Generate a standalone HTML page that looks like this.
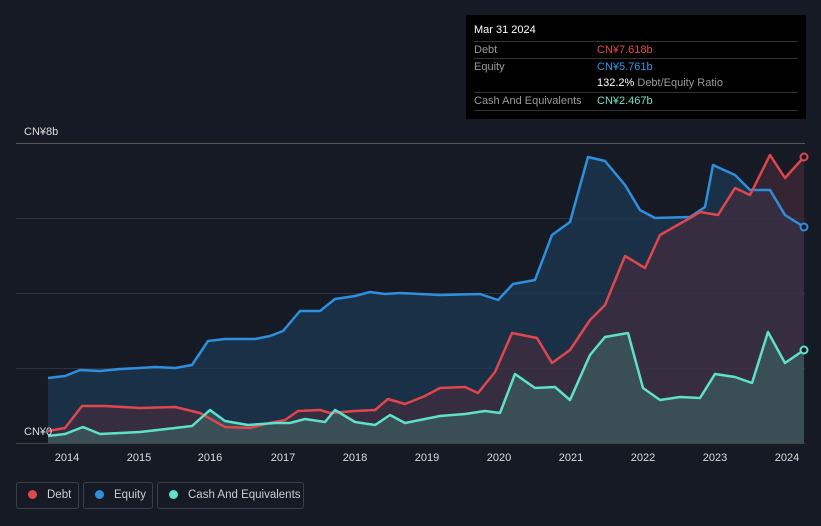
<!DOCTYPE html><html><head><style>
html,body{margin:0;width:821px;height:526px;overflow:hidden;background:#151a24;font-family:"Liberation Sans",sans-serif;}
.tt{position:absolute;left:466px;top:15px;width:340px;height:104px;background:#000;color:#999;font-size:11px}
.tt .r{position:absolute;left:8px;right:8px;border-top:1px solid #333;height:17px;line-height:17px}
.tt b{font-weight:normal;position:absolute;left:123px}
.leg{position:absolute;top:482px;height:27px;border:1px solid #3a3f4a;border-radius:3px;color:#ccc;font-size:11.5px;line-height:25px;box-sizing:border-box;white-space:nowrap;overflow:hidden}
.leg i{display:inline-block;width:9px;height:9px;border-radius:50%;margin:0 10px 0 11px;vertical-align:-1px}
</style></head><body>
<svg width="821" height="526" style="position:absolute;left:0;top:0">
<g stroke="#2c3340" stroke-width="1"><line x1="16" y1="143.5" x2="805" y2="143.5" stroke="#555"/><line x1="16" y1="218.5" x2="805" y2="218.5"/><line x1="16" y1="293.5" x2="805" y2="293.5"/><line x1="16" y1="368.5" x2="805" y2="368.5"/><line x1="16" y1="443.5" x2="805" y2="443.5" stroke="#444"/></g>
<path d="M48,443 L48,378 65,376 80,370 100,371 120,369 140,368 155,367 175,368 192,365 208,341 225,339 255,339 270,336 283,331 300,311 320,311 335,299 355,296 370,292 385,294 400,293 420,294 440,295 480,294 498,300 513,284 535,280 552,235 570,222 588,157 605,161 625,185 640,210 655,218 690,217 705,207 713,165 735,175 750,190 770,190 785,215 804,227 L804,443Z" fill="#1b3a55" fill-opacity=".7"/>
<path d="M48,443 L48,431 65,428 82,406 105,406 140,408 175,407 200,413 225,427 250,428 270,423 285,420 298,411 320,410 330,413 355,411 375,410 388,399 405,404 425,396 440,388 465,387 478,393 495,372 512,333 537,338 552,363 570,350 590,320 605,305 625,256 645,268 660,235 690,218 700,212 718,215 735,188 750,195 770,155 785,178 804,157 L804,443Z" fill="#4a2c3c" fill-opacity=".6"/>
<path d="M48,443 L48,436 65,434 83,427 100,434 120,433 140,432 175,428 192,426 210,410 225,421 248,425 275,423 290,423 305,419 325,422 335,410 355,422 375,425 390,415 405,423 440,416 465,414 485,411 500,413 515,374 535,388 555,387 570,400 590,355 605,337 628,333 643,388 660,400 680,397 700,398 715,374 735,377 752,383 768,332 785,363 804,350 L804,443Z" fill="#3e6a68" fill-opacity=".55"/>
<g fill="none" stroke-width="2.5" stroke-linejoin="round">
<polyline stroke="#2f8fdc" points="48,378 65,376 80,370 100,371 120,369 140,368 155,367 175,368 192,365 208,341 225,339 255,339 270,336 283,331 300,311 320,311 335,299 355,296 370,292 385,294 400,293 420,294 440,295 480,294 498,300 513,284 535,280 552,235 570,222 588,157 605,161 625,185 640,210 655,218 690,217 705,207 713,165 735,175 750,190 770,190 785,215 804,227"/>
<polyline stroke="#e0464e" points="48,431 65,428 82,406 105,406 140,408 175,407 200,413 225,427 250,428 270,423 285,420 298,411 320,410 330,413 355,411 375,410 388,399 405,404 425,396 440,388 465,387 478,393 495,372 512,333 537,338 552,363 570,350 590,320 605,305 625,256 645,268 660,235 690,218 700,212 718,215 735,188 750,195 770,155 785,178 804,157"/>
<polyline stroke="#5fe0c8" points="48,436 65,434 83,427 100,434 120,433 140,432 175,428 192,426 210,410 225,421 248,425 275,423 290,423 305,419 325,422 335,410 355,422 375,425 390,415 405,423 440,416 465,414 485,411 500,413 515,374 535,388 555,387 570,400 590,355 605,337 628,333 643,388 660,400 680,397 700,398 715,374 735,377 752,383 768,332 785,363 804,350"/>
</g>
<circle cx="804" cy="157" r="3.5" fill="#151a24" stroke="#e0464e" stroke-width="2"/>
<circle cx="804" cy="227" r="3.5" fill="#151a24" stroke="#2f8fdc" stroke-width="2"/>
<circle cx="804" cy="350" r="3.5" fill="#151a24" stroke="#5fe0c8" stroke-width="2"/>
<g fill="#ddd" font-size="11" font-family="Liberation Sans">
<text x="24" y="135">CN¥8b</text><text x="24" y="435">CN¥0</text>
<g text-anchor="middle"><text x="67" y="461">2014</text><text x="139" y="461">2015</text><text x="210" y="461">2016</text><text x="283" y="461">2017</text><text x="355" y="461">2018</text><text x="427" y="461">2019</text><text x="499" y="461">2020</text><text x="571" y="461">2021</text><text x="643" y="461">2022</text><text x="715" y="461">2023</text><text x="787" y="461">2024</text></g></g>
</svg>
<div class="tt">
<div style="position:absolute;left:8px;top:9px;color:#fff">Mar 31 2024</div>
<div class="r" style="top:26px">Debt<b style="color:#e5484d">CN¥7.618b</b></div>
<div class="r" style="top:43px">Equity<b style="color:#2f9be6">CN¥5.761b</b></div>
<div class="r" style="top:60px;border-top:none"><b style="color:#fff">132.2% <span style="color:#999">Debt/Equity Ratio</span></b></div>
<div class="r" style="top:77px;border-bottom:1px solid #333">Cash And Equivalents<b style="color:#6be3cc">CN¥2.467b</b></div>
</div>
<div class="leg" style="left:16px;width:63px"><i style="background:#e0464e"></i>Debt</div>
<div class="leg" style="left:83px;width:70px"><i style="background:#2f8fdc"></i>Equity</div>
<div class="leg" style="left:157px;width:147px"><i style="background:#5fe0c8"></i>Cash And Equivalents</div>
</body></html>
